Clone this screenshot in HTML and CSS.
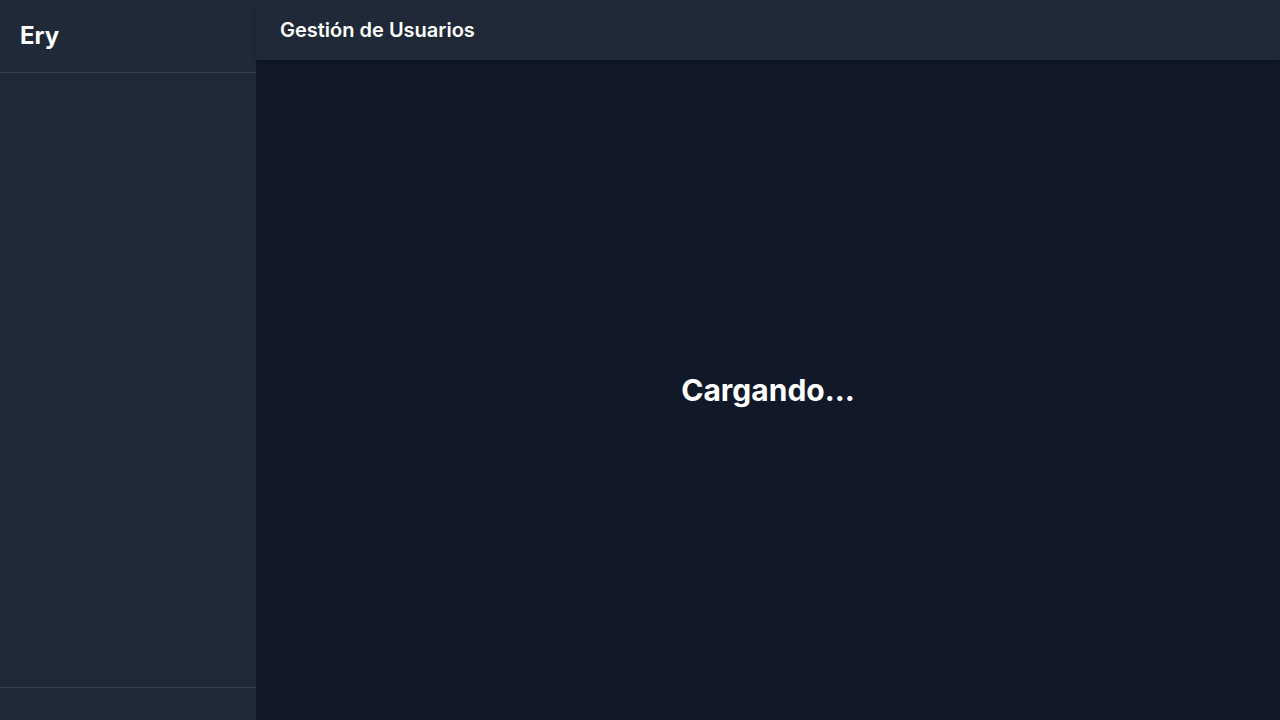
FILE: index.html
```html
<!DOCTYPE html>
<html lang="es">
<head>
<meta charset="utf-8">
<title>Gestión de Usuarios</title>
<link rel="stylesheet" href="styles.css">
</head>
<body>
<div class="app">
  <aside class="sidebar">
    <div class="sidebar-head"><span class="brand">Ery</span></div>
    <nav class="sidebar-nav"></nav>
    <div class="sidebar-foot"></div>
  </aside>
  <div class="main">
    <header class="topbar"><h1 class="title">Gestión de Usuarios</h1></header>
    <main class="content"><div class="loading">Cargando…</div></main>
  </div>
</div>
</body>
</html>
```
FILE: styles.css
```css
* { box-sizing: border-box; }
html, body { margin: 0; height: 100%; }
body {
  font-family: Inter, "Noto Sans", sans-serif;
  color: #fff;
  background: #111827;
}
.app { display: flex; height: 720px; }
.sidebar {
  width: 256px;
  flex-shrink: 0;
  background: #1f2937;
  display: flex;
  flex-direction: column;
}
.sidebar-head {
  height: 73px;
  padding: 0 20px;
  display: flex;
  align-items: center;
  border-bottom: 1px solid #374151;
}
.brand { font-size: 24px; font-weight: 700; line-height: 32px; }
.sidebar-nav { flex: 1; }
.sidebar-foot { height: 33px; border-top: 1px solid #374151; }
.main { flex: 1; display: flex; flex-direction: column; min-width: 0; }
.topbar {
  height: 60px;
  background: #1f2937;
  padding: 0 24px;
  display: flex;
  align-items: center;
  box-shadow: 0 4px 6px -1px rgba(0,0,0,0.1), 0 2px 4px -2px rgba(0,0,0,0.1);
  position: relative;
  z-index: 1;
}
.title { margin: 0; font-size: 20px; font-weight: 600; line-height: 28px; }
.content {
  flex: 1;
  display: flex;
  align-items: center;
  justify-content: center;
}
.loading { font-size: 30px; font-weight: 700; line-height: 36px; }
```
